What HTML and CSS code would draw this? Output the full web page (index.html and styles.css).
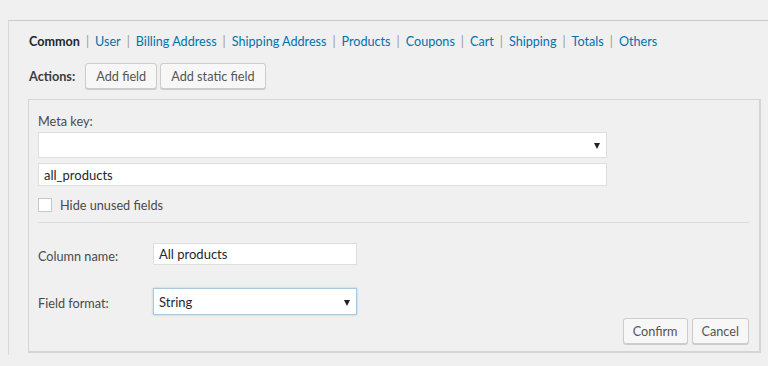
FILE: index.html
```html
<!DOCTYPE html>
<html lang="en">
<head>
    <meta charset="UTF-8">
    <title>Export fields</title>
    <link rel="stylesheet" href="styles.css">
</head>
<body>
    <div class="frame">
        <ul class="tabs">
            <li class="current">Common</li>
            <li><a href="#">User</a></li>
            <li><a href="#">Billing Address</a></li>
            <li><a href="#">Shipping Address</a></li>
            <li><a href="#">Products</a></li>
            <li><a href="#">Coupons</a></li>
            <li><a href="#">Cart</a></li>
            <li><a href="#">Shipping</a></li>
            <li><a href="#">Totals</a></li>
            <li><a href="#">Others</a></li>
        </ul>

        <div class="actions">
            <strong>Actions:</strong>
            <button class="btn">Add field</button>
            <button class="btn">Add static field</button>
        </div>

        <div class="box">
            <label class="meta-label">Meta key:</label>
            <div class="select-wrap wide">
                <select class="select"><option></option></select>
            </div>
            <input class="text wide" type="text" value="all_products">
            <label class="check">
                <input type="checkbox">
                <span>Hide unused fields</span>
            </label>
            <hr class="sep">

            <div class="form-grid">
                <label>Column name:</label>
                <input class="text short" type="text" value="All products">
                <label>Field format:</label>
                <div class="select-wrap focus">
                    <select class="select"><option>String</option></select>
                </div>
            </div>

            <div class="footer-buttons">
                <button class="btn">Confirm</button>
                <button class="btn">Cancel</button>
            </div>
        </div>
    </div>
</body>
</html>
```

FILE: styles.css
```css
:root {
    --bg-color: #f0f0f0;
    --text-color: #4a4a4a;
    --dark-text: #23282d;
    --link-color: #0073aa;
    --border-color: #d5d5d5;
    --field-border: #dedede;
}

body {
    margin: 0;
    font-family: Lato, "Open Sans", sans-serif;
    font-size: 12.7px;
    background-color: var(--bg-color);
    color: var(--text-color);
    height: 366px;
    overflow: hidden;
}

.frame {
    margin: 20px 0 0 8px;
    border-top: 1px solid #ccc8c8;
    border-left: 1px solid #d8d8d8;
    padding: 12px 0 0 19px;
    height: 335px;
    box-sizing: border-box;
}

.tabs {
    list-style: none;
    margin: 0 0 0 1px;
    padding: 0;
    display: flex;
    line-height: 18px;
    font-size: 12.6px;
}

.tabs li {
    color: #a09896;
}

.tabs li + li::before {
    content: "|";
    margin: 0 6px;
}

.tabs .current {
    font-weight: bold;
    color: var(--dark-text);
}

.tabs a {
    color: var(--link-color);
    text-decoration: none;
}

.actions {
    display: flex;
    align-items: center;
    gap: 3px;
    margin-top: 12px;
    margin-left: 1px;
}

.actions strong {
    margin-right: 7px;
    color: #3c3c3c;
}

.btn {
    font-family: inherit;
    font-size: 12.7px;
    color: #555;
    background: #f7f7f7;
    border: 1px solid #cccccc;
    border-radius: 3px;
    box-shadow: 0 1px 0 #cccccc;
    height: 26px;
    padding: 0 10px;
    cursor: pointer;
}

.box {
    margin-top: 10px;
    width: 712px;
    border: 1px solid var(--border-color);
    border-right-width: 2px;
    border-bottom-width: 2px;
    padding: 12px 9px 7px 9px;
}

.meta-label {
    display: block;
    line-height: 18px;
    margin-bottom: 2px;
}

.select-wrap {
    position: relative;
    background: #fff;
    border: 1px solid var(--field-border);
    height: 24px;
    box-sizing: border-box;
}

.select-wrap::after {
    content: "";
    position: absolute;
    right: 6px;
    top: 50%;
    margin-top: -2px;
    border-left: 3.5px solid transparent;
    border-right: 3.5px solid transparent;
    border-top: 6px solid #222;
    pointer-events: none;
}

.select-wrap.wide {
    width: 569px;
    height: 26px;
}

.select-wrap.focus {
    border-color: #a9c8e0;
    box-shadow: 0 0 2px rgba(30, 140, 190, 0.35);
    height: 27px;
}

.select {
    appearance: none;
    -webkit-appearance: none;
    border: none;
    background: transparent;
    width: 100%;
    height: 100%;
    font-family: inherit;
    font-size: 13px;
    color: var(--dark-text);
    padding: 0 5px;
    outline: none;
}

.text {
    display: block;
    box-sizing: border-box;
    background: #fff;
    border: 1px solid var(--field-border);
    font-family: inherit;
    font-size: 13px;
    color: var(--dark-text);
    padding: 0 5px;
    outline: none;
}

.text.wide {
    width: 569px;
    height: 23px;
    margin-top: 5px;
}

.text.short {
    width: 204px;
    height: 22px;
}

.check {
    display: flex;
    align-items: center;
    gap: 8px;
    margin-top: 10px;
    line-height: 18px;
}

.check input {
    appearance: none;
    -webkit-appearance: none;
    margin: 0;
    width: 14px;
    height: 14px;
    background: #fff;
    border: 1px solid #c8c8c8;
}

.sep {
    border: none;
    border-top: 1px solid #dcdcdc;
    margin: 8px 1px 0 0;
}

.form-grid {
    display: grid;
    grid-template-columns: 115px 204px;
    align-items: center;
    row-gap: 23px;
    margin-top: 20px;
}

.form-grid label {
    margin-top: 3px;
}

.footer-buttons {
    display: flex;
    justify-content: flex-end;
    gap: 4px;
    margin-top: 3px;
    padding-right: 1px;
}

.footer-buttons .btn {
    padding: 0 9px;
}
```
